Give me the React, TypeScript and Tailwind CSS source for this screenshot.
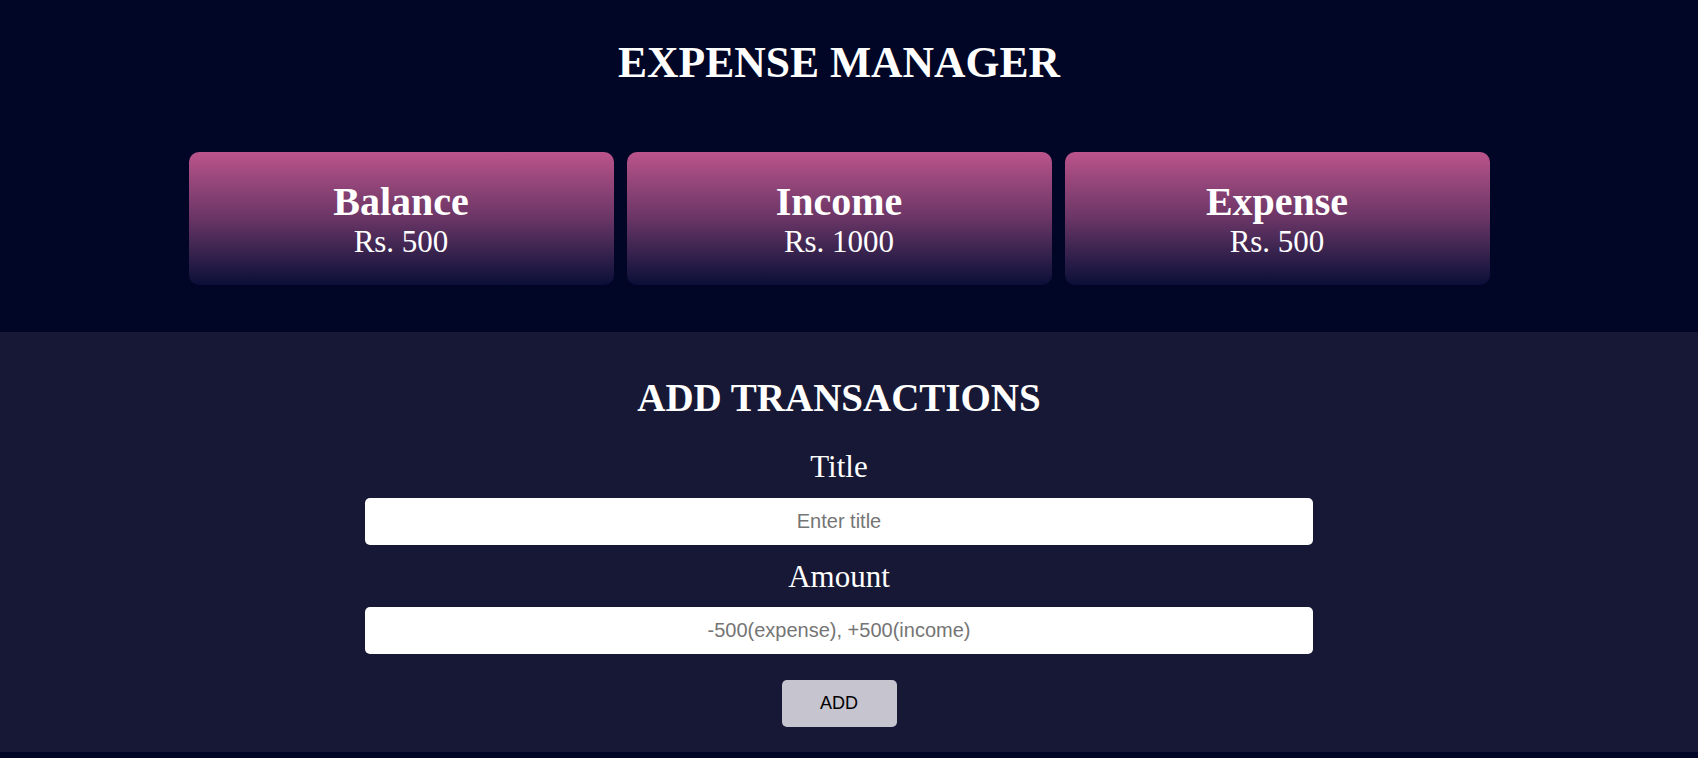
import { useState } from 'react'

const cards = [
    { label: 'Balance', amount: 'Rs. 500' },
    { label: 'Income', amount: 'Rs. 1000' },
    { label: 'Expense', amount: 'Rs. 500' },
]

export default function App() {
    const [title, setTitle] = useState('')
    const [amount, setAmount] = useState('')

    return (
        <div className="min-h-[758px] bg-[#020626] font-['Liberation_Serif','Times_New_Roman',serif] text-white">
            {/* Header + summary cards */}
            <section className="flex flex-col items-center pr-[20px] pt-[38px] pb-[47px]">
                <h1 className="text-[43.6px] font-bold leading-[1.107]">EXPENSE MANAGER</h1>

                <div className="mt-[66px] flex gap-[13px]">
                    {cards.map((card) => (
                        <div
                            key={card.label}
                            className="flex h-[133px] w-[425px] flex-col items-center justify-center rounded-[10px] bg-gradient-to-b from-[#bb548b] via-[#6a3565] to-[#0a0e38] pt-[2px]"
                        >
                            <span className="text-[40px] font-bold leading-[1.107]">{card.label}</span>
                            <span className="text-[31px] leading-[1.107]">{card.amount}</span>
                        </div>
                    ))}
                </div>
            </section>

            {/* Add transaction form */}
            <section className="flex flex-col items-center bg-[#171835] pr-[20px] pt-[44px] pb-[25px]">
                <h2 className="text-[39px] font-bold leading-[1.107]">ADD TRANSACTIONS</h2>

                <label className="mt-[31px] text-[31px] leading-[1.107]">Title</label>
                <input
                    value={title}
                    onChange={(e) => setTitle(e.target.value)}
                    placeholder="Enter title"
                    className="mt-[13px] h-[47px] w-[948px] rounded-[5px] bg-white text-center font-['Liberation_Sans',Arial,sans-serif] text-[20px] text-black outline-none placeholder:text-[#757575]"
                />

                <label className="mt-[15px] text-[31px] leading-[1.107]">Amount</label>
                <input
                    value={amount}
                    onChange={(e) => setAmount(e.target.value)}
                    placeholder="-500(expense), +500(income)"
                    className="mt-[13px] h-[47px] w-[948px] rounded-[5px] bg-white text-center font-['Liberation_Sans',Arial,sans-serif] text-[20px] text-black outline-none placeholder:text-[#757575]"
                />

                <button className="mt-[26px] h-[47px] w-[115px] rounded-[5px] bg-[#c6c4ce] font-['Liberation_Sans',Arial,sans-serif] text-[18px] text-black">
                    ADD
                </button>
            </section>
        </div>
    )
}
